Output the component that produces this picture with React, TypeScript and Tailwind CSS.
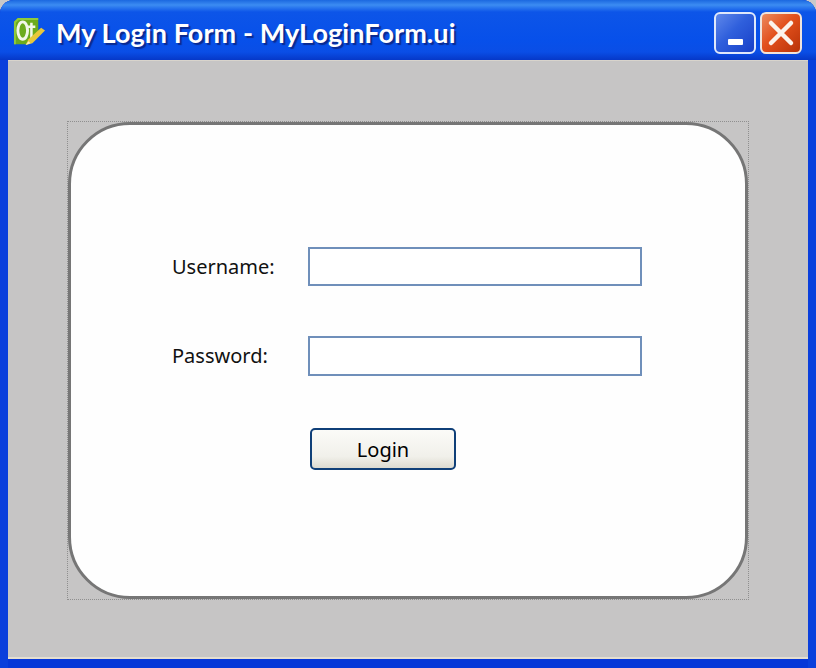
export default function App() {
  return (
    <div className="w-[816px] h-[668px] bg-[#c9c9c9] overflow-hidden">
      <div className="w-full h-full flex flex-col rounded-t-[14px] bg-[#0637d8] shadow-[inset_8px_0_0_#0a3fdc,inset_-8px_0_0_#0a3fdc]">
        <div className="h-[60px] shrink-0 flex items-center pl-[13px] pr-[14px] pt-[5px] rounded-t-[14px] bg-[linear-gradient(180deg,#1b68e0_0px,#3c8cf2_5px,#0d55e8_12px,#0750ea_40px,#0a4ee6_52px,#0638c8_60px)]">
          <svg width="32" height="32" viewBox="0 0 33 33" className="shrink-0">
            <path d="M5 1 L26 1 L26 17 L16 28 L1 28 L1 5 Z" fill="#6cab1e" />
            <path d="M5 1 L1 5 L1 28 L3 28 L3 6 L6 3 L26 3 L26 1 Z" fill="#8fca3a" />
            <ellipse cx="10" cy="14" rx="5" ry="9" fill="none" stroke="#f2f7e8" strokeWidth="3" />
            <path d="M19 6 L19 22 M15.5 10 L23 10" stroke="#f2f7e8" strokeWidth="2.6" fill="none" />
            <path d="M13 29 L16 23 L29 11 L33 14 L20 27 Z" fill="#e8c83a" />
            <path d="M13 29 L16 25 L18 27 Z" fill="#f4ecc0" />
          </svg>
          <div className="ml-[11px] text-white text-[27px] leading-none font-bold font-['Lato',sans-serif] tracking-[0.08px] whitespace-nowrap [text-shadow:2px_2px_1px_#0a2a90]">
            My Login Form - MyLoginForm.ui
          </div>
          <div className="ml-auto flex gap-[4px]">
            <div className="w-[42px] h-[42px] rounded-[6px] border-2 border-[#dfe8fb] bg-[linear-gradient(135deg,#5f88ea_0%,#2f5fdc_45%,#1840c8_100%)] flex items-end justify-center pb-[7px]">
              <div className="w-[15px] h-[6px] bg-white rounded-[1px]" />
            </div>
            <div className="w-[42px] h-[42px] rounded-[6px] border-2 border-[#f0e4dc] bg-[linear-gradient(135deg,#ec8a5e_0%,#e2501c_45%,#b83208_100%)] flex items-center justify-center">
              <svg width="30" height="30" viewBox="0 0 30 30">
                <path d="M5 5 L25 25 M25 5 L5 25" stroke="#fbf3ec" strokeWidth="4.5" strokeLinecap="round" />
              </svg>
            </div>
          </div>
        </div>
        <div className="mx-[8px] mb-[9px] flex-1 bg-[#c6c5c5] border-t border-[#d8d4cc] border-b-2 border-b-[#e4ded0] px-[60px] pt-[61px] pb-[58px] flex">
          <div className="relative flex-1 flex">
            <div className="absolute -inset-px border border-dotted border-[#8f8f8f]" />
            <div className="relative flex-1 bg-[#fefefe] border-[3px] border-[#767676] rounded-[62px] pl-[101px] pt-[122px]">
              <div className="flex items-center h-[39px]">
                <div className="w-[136px] text-[20px] text-[#111] font-['Noto_Sans',sans-serif]">Username:</div>
                <div className="w-[334px] h-[39px] bg-white border-2 border-[#6f8fba]" />
              </div>
              <div className="flex items-center h-[40px] mt-[50px]">
                <div className="w-[136px] text-[20px] text-[#111] font-['Noto_Sans',sans-serif]">Password:</div>
                <div className="w-[334px] h-[40px] bg-white border-2 border-[#6f8fba]" />
              </div>
              <div className="ml-[138px] mt-[52px] w-[146px] h-[42px] pt-[2px] rounded-[5px] border-2 border-[#0f3f78] bg-[linear-gradient(180deg,#fbfbf8_0%,#f1f0ea_70%,#dcdad0_100%)] flex items-center justify-center text-[20px] text-black font-['Noto_Sans',sans-serif]">
                Login
              </div>
            </div>
          </div>
        </div>
      </div>
    </div>
  );
}
